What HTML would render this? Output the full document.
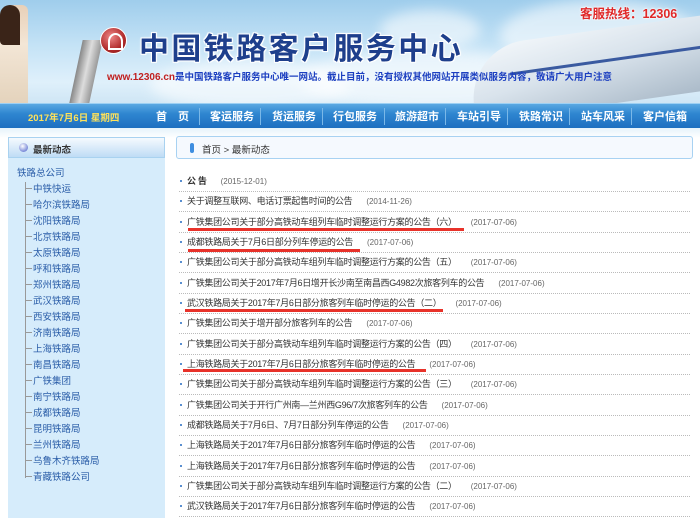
<!DOCTYPE html>
<html><head><meta charset="utf-8"><style>
*{margin:0;padding:0;box-sizing:border-box}
body{width:700px;height:518px;overflow:hidden;background:#fff;font-family:"Liberation Sans","Noto Sans CJK SC",sans-serif;position:relative}
.hd{position:absolute;left:0;top:0;width:700px;height:103px;background:linear-gradient(180deg,#9fcdec 0%,#c5e3f6 45%,#dff0fb 80%,#cfe6f5 100%);overflow:hidden}
.cloud{position:absolute;background:#fff;border-radius:50%;opacity:.55;filter:blur(6px)}
.title{position:absolute;left:139px;top:24px;font-size:30px;font-weight:bold;color:#1e3f8c;letter-spacing:2.4px;text-shadow:-1px -1px 0 #fff,1px -1px 0 #fff,-1px 1px 0 #fff,1px 1px 0 #fff,0 0 3px #fff;font-family:"Noto Sans CJK SC",sans-serif}
.logo{position:absolute;left:100px;top:27px;width:27px;height:27px;border-radius:50%;background:radial-gradient(circle at 40% 35%,#e88,#b02a2a 60%,#7a1515);border:1px solid #fff}
.logo:after{content:"";position:absolute;left:7px;top:5px;width:11px;height:13px;border:2px solid #fff;border-radius:50% 50% 0 0}
.hot{position:absolute;left:580px;top:3px;font-size:12.5px;font-weight:bold;color:#e02828;text-shadow:0 0 2px #fff,0 0 2px #fff}
.url{position:absolute;left:107px;top:69px;font-size:9.5px;color:#1c3fc0;white-space:nowrap;font-weight:bold}
.url b{color:#c02020;font-size:10px}
.girl{position:absolute;left:0;top:5px;width:28px;height:98px;background:linear-gradient(180deg,#e8d0b8,#f3e6d6 40%,#e4d3bc);border-radius:14px 6px 0 0}
.hair{position:absolute;left:0;top:5px;width:20px;height:40px;background:#3a2418;border-radius:10px 10px 0 4px}
.screen{position:absolute;left:76px;top:40px;width:20px;height:63px;background:linear-gradient(90deg,#888,#ddd,#999);transform:skewX(-12deg)}
.train{position:absolute;left:470px;top:30px;width:260px;height:75px;background:linear-gradient(170deg,#f4f8fb 0%,#d9e3ec 45%,#a7b7c6 100%);border-radius:70px 0 0 20px;transform:rotate(-8deg)}
.train:after{content:"";position:absolute;left:40px;top:30px;width:220px;height:3px;background:#3a5aa0}
.nav{position:absolute;left:0;top:103px;width:700px;height:25px;background:linear-gradient(180deg,#5aa8e2 0%,#2f86d0 40%,#1d6fc0 100%);border-top:1px solid #9dd0f3}
.nav .date{position:absolute;left:28px;top:6px;font-size:9.5px;color:#ffe25a;font-weight:bold}
.nav .it{position:absolute;top:4px;font-size:11px;color:#fff;font-weight:bold;white-space:nowrap}
.nav .sep{position:absolute;top:4px;width:1px;height:17px;background:#1a5a9a;border-right:1px solid #7ab8e8}
.below{position:absolute;left:0;top:128px;width:700px;height:10px;background:linear-gradient(#e6f3fb,#fff)}
.side{position:absolute;left:8px;top:137px;width:157px;height:381px;background:#d6ecfb}
.stitle{height:21px;background:linear-gradient(#f5fafe,#bfdcf5);border:1px solid #a9d2f0;font-size:9.5px;font-weight:bold;color:#333;padding:4px 0 0 24px;position:relative}
.stitle:before{content:"";position:absolute;left:10px;top:5px;width:9px;height:9px;border-radius:50%;background:radial-gradient(circle at 40% 35%,#fff,#7a8ad8 70%)}
.root{position:absolute;left:9px;top:28px;font-size:9.5px;color:#2a5da8}
.tree{position:absolute;left:17px;top:45px;width:2px;height:296px;border-left:1px solid #999}
.ch{position:absolute;left:17px;font-size:9.5px;color:#2a5da8;padding-left:8px;white-space:nowrap}
.ch:before{content:"";position:absolute;left:0;top:7px;width:7px;border-top:1px solid #999}
.bc{position:absolute;left:176px;top:136px;width:517px;height:23px;border:1px solid #a8d2f2;border-radius:3px;background:#f5f9fe;font-size:9.5px;color:#333;padding:5px 0 0 25px}
.bc:before{content:"";position:absolute;left:13px;top:6px;width:4px;height:10px;border-radius:2px;background:#3e8ee0}
.row{position:absolute;left:179px;width:511px;height:20px;border-bottom:1px dotted #bbb;font-size:9px;letter-spacing:-0.3px;color:#333;white-space:nowrap;padding:2px 0 0 8px}
.row:before{content:"";position:absolute;left:1px;top:8px;width:2px;height:2px;background:#5a8fd0}
.row i{font-style:normal;color:#666;font-size:8px;margin-left:14px;letter-spacing:0}
.red{position:absolute;height:3px;background:#e8322a}
</style></head><body>
<div class="hd">
<div class="cloud" style="left:300px;top:50px;width:260px;height:60px"></div>
<div class="cloud" style="left:150px;top:60px;width:200px;height:50px"></div>
<div class="cloud" style="left:500px;top:0px;width:200px;height:70px"></div>
<div class="cloud" style="left:380px;top:10px;width:100px;height:40px"></div>
<div class="train"></div>
<div class="girl"></div><div class="hair"></div><div class="screen"></div>
<div class="logo"></div>
<div class="title">中国铁路客户服务中心</div>
<div class="hot">客服热线：12306</div>
<div class="url"><b>www.12306.cn</b>是中国铁路客户服务中心唯一网站。截止目前，没有授权其他网站开展类似服务内容，敬请广大用户注意</div>
</div>
<div class="nav">
<div class="date">2017年7月6日 星期四</div>
<div class="it" style="left:156px">首　页</div><div class="sep" style="left:199px"></div>
<div class="it" style="left:210px">客运服务</div><div class="sep" style="left:260px"></div>
<div class="it" style="left:272px">货运服务</div><div class="sep" style="left:322px"></div>
<div class="it" style="left:333px">行包服务</div><div class="sep" style="left:384px"></div>
<div class="it" style="left:395px">旅游超市</div><div class="sep" style="left:445px"></div>
<div class="it" style="left:457px">车站引导</div><div class="sep" style="left:507px"></div>
<div class="it" style="left:519px">铁路常识</div><div class="sep" style="left:569px"></div>
<div class="it" style="left:581px">站车风采</div><div class="sep" style="left:631px"></div>
<div class="it" style="left:643px">客户信箱</div>
</div>
<div class="below"></div>
<div class="side">
<div class="stitle">最新动态</div>
<div class="root">铁路总公司</div>
<div class="tree"></div>
<div class="ch" style="top:44px">中铁快运</div>
<div class="ch" style="top:60px">哈尔滨铁路局</div>
<div class="ch" style="top:76px">沈阳铁路局</div>
<div class="ch" style="top:92px">北京铁路局</div>
<div class="ch" style="top:108px">太原铁路局</div>
<div class="ch" style="top:124px">呼和铁路局</div>
<div class="ch" style="top:140px">郑州铁路局</div>
<div class="ch" style="top:156px">武汉铁路局</div>
<div class="ch" style="top:172px">西安铁路局</div>
<div class="ch" style="top:188px">济南铁路局</div>
<div class="ch" style="top:204px">上海铁路局</div>
<div class="ch" style="top:220px">南昌铁路局</div>
<div class="ch" style="top:236px">广铁集团</div>
<div class="ch" style="top:252px">南宁铁路局</div>
<div class="ch" style="top:268px">成都铁路局</div>
<div class="ch" style="top:284px">昆明铁路局</div>
<div class="ch" style="top:300px">兰州铁路局</div>
<div class="ch" style="top:316px">乌鲁木齐铁路局</div>
<div class="ch" style="top:332px">青藏铁路公司</div>
</div>
<div class="bc">首页 &gt; 最新动态</div>
<div class="row" style="top:172px"><b>公 告</b><i>(2015-12-01)</i></div>
<div class="row" style="top:192px">关于调整互联网、电话订票起售时间的公告<i>(2014-11-26)</i></div>
<div class="row" style="top:213px">广铁集团公司关于部分高铁动车组列车临时调整运行方案的公告（六）<i>(2017-07-06)</i></div>
<div class="row" style="top:233px">成都铁路局关于7月6日部分列车停运的公告<i>(2017-07-06)</i></div>
<div class="row" style="top:253px">广铁集团公司关于部分高铁动车组列车临时调整运行方案的公告（五）<i>(2017-07-06)</i></div>
<div class="row" style="top:274px">广铁集团公司关于2017年7月6日增开长沙南至南昌西G4982次旅客列车的公告<i>(2017-07-06)</i></div>
<div class="row" style="top:294px">武汉铁路局关于2017年7月6日部分旅客列车临时停运的公告（二）<i>(2017-07-06)</i></div>
<div class="row" style="top:314px">广铁集团公司关于增开部分旅客列车的公告<i>(2017-07-06)</i></div>
<div class="row" style="top:335px">广铁集团公司关于部分高铁动车组列车临时调整运行方案的公告（四）<i>(2017-07-06)</i></div>
<div class="row" style="top:355px">上海铁路局关于2017年7月6日部分旅客列车临时停运的公告<i>(2017-07-06)</i></div>
<div class="row" style="top:375px">广铁集团公司关于部分高铁动车组列车临时调整运行方案的公告（三）<i>(2017-07-06)</i></div>
<div class="row" style="top:396px">广铁集团公司关于开行广州南—兰州西G96/7次旅客列车的公告<i>(2017-07-06)</i></div>
<div class="row" style="top:416px">成都铁路局关于7月6日、7月7日部分列车停运的公告<i>(2017-07-06)</i></div>
<div class="row" style="top:436px">上海铁路局关于2017年7月6日部分旅客列车临时停运的公告<i>(2017-07-06)</i></div>
<div class="row" style="top:457px">上海铁路局关于2017年7月6日部分旅客列车临时停运的公告<i>(2017-07-06)</i></div>
<div class="row" style="top:477px">广铁集团公司关于部分高铁动车组列车临时调整运行方案的公告（二）<i>(2017-07-06)</i></div>
<div class="row" style="top:497px">武汉铁路局关于2017年7月6日部分旅客列车临时停运的公告<i>(2017-07-06)</i></div>
<div class="red" style="left:188px;top:228px;width:276px"></div>
<div class="red" style="left:188px;top:249px;width:172px"></div>
<div class="red" style="left:185px;top:309px;width:258px"></div>
<div class="red" style="left:183px;top:369px;width:243px"></div>
</body></html>
